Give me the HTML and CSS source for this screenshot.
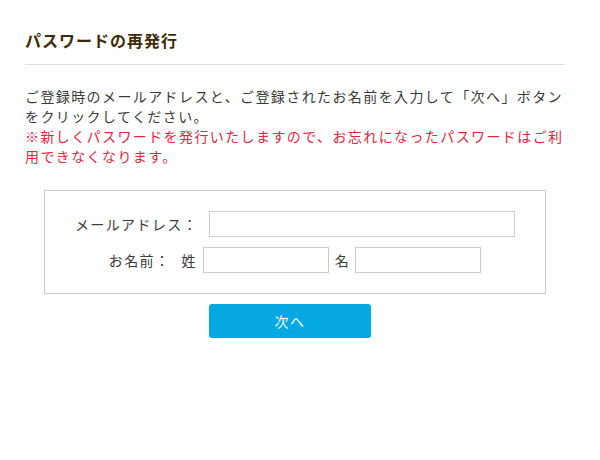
FILE: index.html
```html
<!DOCTYPE html>
<html lang="ja">
<head>
<meta charset="utf-8">
<link rel="stylesheet" href="styles.css">
</head>
<body>
<div class="page">
  <h1 class="title">パスワードの再発行</h1>
  <p class="lead">ご登録時のメールアドレスと、ご登録されたお名前を入力して「次へ」ボタンをクリックしてください。<br><span class="note">※新しくパスワードを発行いたしますので、お忘れになったパスワードはご利用できなくなります。</span></p>
  <div class="form-box">
    <div class="row">
      <span class="label label-mail">メールアドレス：</span>
      <input class="field field-mail" type="text">
    </div>
    <div class="row">
      <span class="label label-name">お名前：</span>
      <span class="sub sub-sei">姓</span>
      <input class="field field-name" type="text">
      <span class="sub sub-mei">名</span>
      <input class="field field-name" type="text">
    </div>
  </div>
  <div class="actions">
    <button class="btn" type="button">次へ</button>
  </div>
</div>
</body>
</html>
```

FILE: styles.css
```css
html, body {
  margin: 0;
  padding: 0;
  background: #fff;
}
body {
  font-family: "Noto Sans CJK JP", "Noto Sans", sans-serif;
  color: #3a3a3a;
}
.page {
  width: 540px;
  padding: 28px 25px 0;
}
.title {
  margin: 0;
  font-size: 16px;
  line-height: 24px;
  font-weight: bold;
  letter-spacing: 1px;
  color: #3d2b07;
  padding-bottom: 12px;
  border-bottom: 1px solid #ddd;
}
.lead {
  margin: 21px 0 0;
  font-size: 14px;
  line-height: 20px;
  letter-spacing: 1.4px;
  color: #3a3a3a;
}
.note {
  color: #e5253c;
}
.form-box {
  margin: 24px auto 0;
  width: 500px;
  border: 1px solid #ccc;
  padding: 20px 0;
}
.row {
  display: flex;
  justify-content: center;
  align-items: center;
  font-size: 14px;
  letter-spacing: 1.4px;
  color: #3a3a3a;
  height: 26px;
}
.row + .row {
  margin-top: 10px;
}
.label-mail { margin-right: 11px; }
.label-name { margin-right: 11px; }
.sub-sei { margin-right: 6px; }
.sub-mei { margin-left: 6px; margin-right: 5px; }
.field {
  box-sizing: border-box;
  height: 26px;
  border: 1px solid #ccc;
  background: #fff;
  margin: 0;
  padding: 0 4px;
}
.field-mail { width: 306px; }
.field-name { width: 126px; }
.actions {
  display: flex;
  justify-content: center;
  margin-top: 10px;
  padding-right: 10px;
}
.btn {
  width: 162px;
  height: 34px;
  border: 0;
  border-radius: 3px;
  background: #05a8e0;
  color: #fff;
  font-family: "Noto Sans CJK JP", "Noto Sans", sans-serif;
  font-size: 14px;
  letter-spacing: 1.4px;
  cursor: pointer;
}
```
